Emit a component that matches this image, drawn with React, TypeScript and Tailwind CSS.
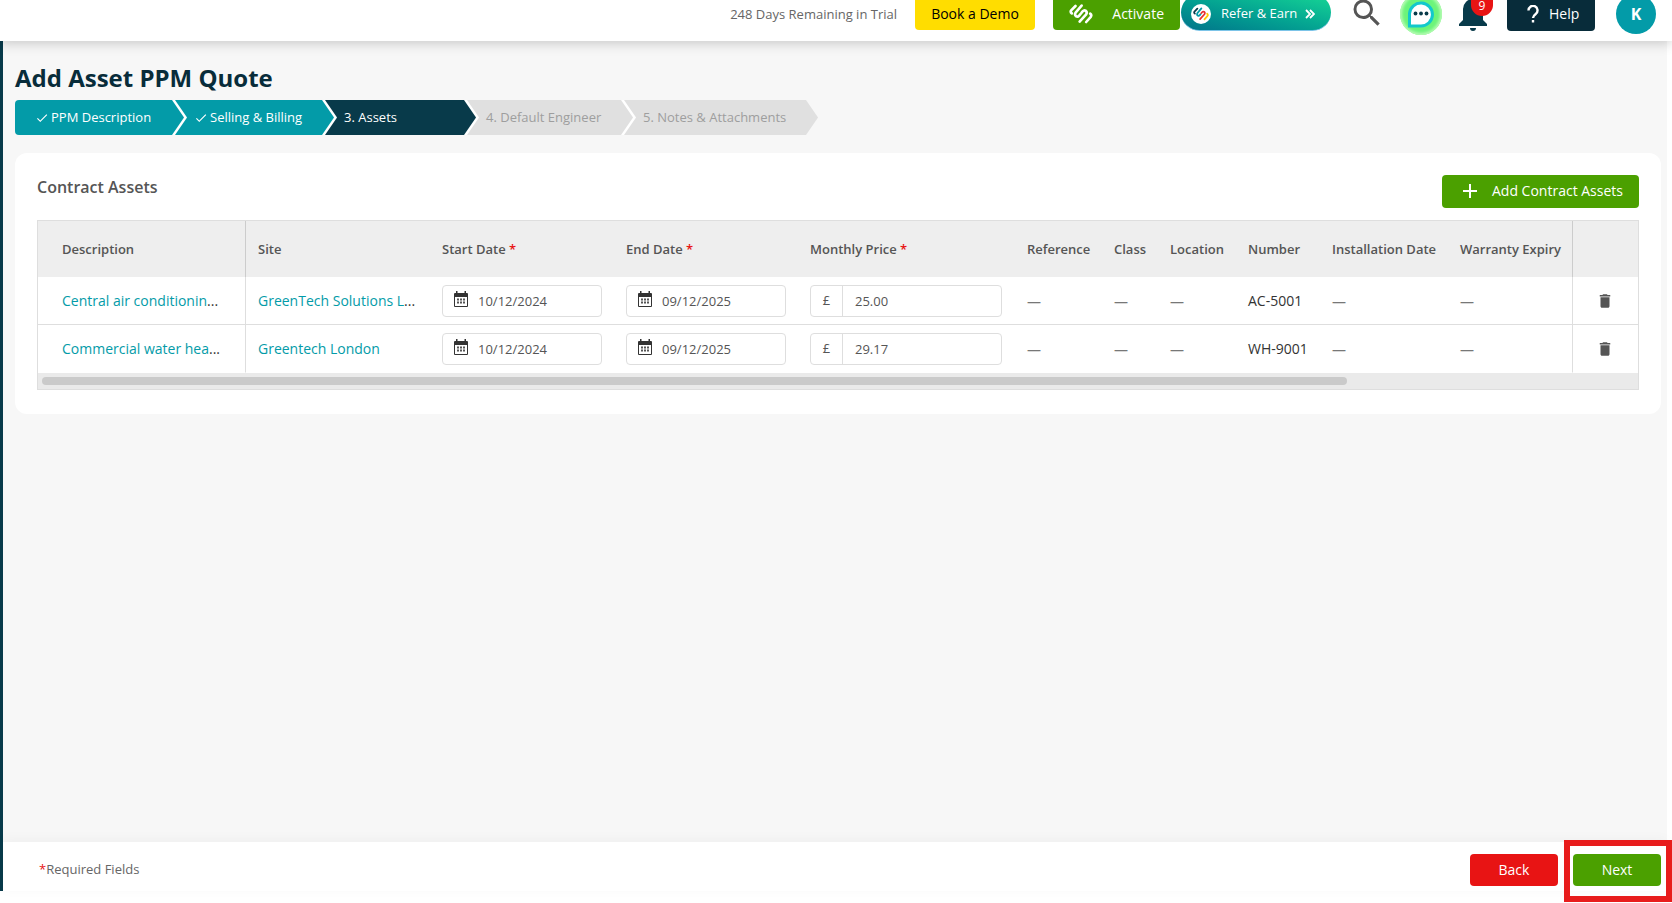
import { useState } from 'react';
import { MdCheck, MdDelete, MdSearch } from 'react-icons/md';

const STEPS = [
  { label: 'PPM Description', state: 'done', width: 'min-w-[157px]' },
  { label: 'Selling & Billing', state: 'done', width: 'min-w-[150px]' },
  { label: '3. Assets', state: 'active', width: 'min-w-[142px]' },
  { label: '4. Default Engineer', state: 'pending', width: 'min-w-[157px]' },
  { label: '5. Notes & Attachments', state: 'pending', width: 'min-w-[185px]' },
];

const STEP_STYLES: Record<string, { box: string; arrow: string }> = {
  done: { box: 'bg-[#039ba8] text-white', arrow: 'bg-[#039ba8]' },
  active: { box: 'bg-[#083a4a] text-white', arrow: 'bg-[#083a4a]' },
  pending: { box: 'bg-[#e0e0e0] text-[#9e9e9e]', arrow: 'bg-[#e0e0e0]' },
};

const ASSETS = [
  {
    description: 'Central air conditionin',
    site: 'GreenTech Solutions L',
    siteCut: true,
    start: '10/12/2024',
    end: '09/12/2025',
    price: '25.00',
    number: 'AC-5001',
  },
  {
    description: 'Commercial water hea',
    site: 'Greentech London',
    siteCut: false,
    start: '10/12/2024',
    end: '09/12/2025',
    price: '29.17',
    number: 'WH-9001',
  },
];

function BrandMark({ className, colors }: { className: string; colors: string[] }) {
  return (
    <svg viewBox="0 0 24 20" className={className} fill="none" strokeWidth="2.600" strokeLinecap="round" strokeLinejoin="round">
      <path d="M6.500 2L2.200 6.400Q1 8 2.800 9.400" stroke={colors[0]} />
      <path d="M12.600 1.600L6.600 8.600Q5.200 11 7.200 12.400Q8.800 13.200 10.200 11.600L11.400 10.200" stroke={colors[1]} />
      <path d="M10.600 17.600L17.200 10.400Q18.600 8 16.600 6.600Q15 5.800 13.600 7.400L12.400 8.800" stroke={colors[2]} />
      <path d="M21.200 9.600Q23 11 21.800 12.800L17.200 18" stroke={colors[3]} />
    </svg>
  );
}

function CalendarIcon() {
  return (
    <svg viewBox="0 0 14 16" className="mb-[3px] h-4 w-[14px] shrink-0" fill="#333">
      <path
        fillRule="evenodd"
        d="M2 0h1.500v2h7V0H12v2h1a1 1 0 0 1 1 1v12a1 1 0 0 1-1 1H1a1 1 0 0 1-1-1V3a1 1 0 0 1 1-1h1zM1 6v9h12V6z"
      />
      <path d="M3 7.500h2v2H3zM6 7.500h2v2H6zM9 7.500h2v2H9zM3 10.500h2v2H3zM6 10.500h2v2H6zM9 10.500h2v2H9z" fill="#555" />
    </svg>
  );
}

function DateField({ label, value }: { label: string; value: string }) {
  return (
    <label className="flex h-8 w-[160px] items-center gap-[10px] rounded border border-[#dedede] bg-white pl-[11px]">
      <CalendarIcon />
      <input
        aria-label={label}
        defaultValue={value}
        className="w-full min-w-0 bg-transparent pt-[2px] text-[13px] text-[#555] outline-none"
      />
    </label>
  );
}

function TopBar() {
  return (
    <header className="relative z-10 flex h-[41px] shrink-0 items-start justify-end bg-white pr-4 shadow-[0_2px_12px_rgba(0,0,0,0.2)]">
      <span className="mr-[18px] text-[13px] leading-7 text-[#666]">248 Days Remaining in Trial</span>
      <button className="mr-[18px] h-[30px] w-[120px] rounded-b bg-[#ffdd00] pb-[3px] text-[14px] text-black">
        Book a Demo
      </button>
      <button className="flex h-[30px] w-[127px] items-center rounded-b bg-[#4ba000] pr-4 pb-[3px] pl-4 text-[14px] text-white">
        <BrandMark className="h-5 w-6" colors={['#fff', '#fff', '#fff', '#fff']} />
        <span className="ml-auto">Activate</span>
      </button>
      <button className="ml-px -mt-[6px] flex h-[37px] w-[150px] items-center rounded-full border-b border-[#7cc4e8] bg-linear-to-tr from-[#03748a] to-[#18d894] pt-[3px] pl-[10px] text-[13px] text-white">
        <span className="flex size-5 items-center justify-center rounded-full bg-white">
          <BrandMark className="h-[14px] w-4" colors={['#083a4a', '#039ba8', '#e83030', '#ffc800']} />
        </span>
        <span className="ml-[10px]">Refer &amp; Earn</span>
        <svg viewBox="0 0 10 10" className="ml-2 size-[10px]" fill="none" stroke="#fff" strokeWidth="1.800">
          <path d="M1 1l4 4-4 4M5 1l4 4-4 4" />
        </svg>
      </button>
      <button aria-label="Search" className="ml-[18px] h-7 w-9 text-[#555]">
        <MdSearch className="-mt-[5px] size-9" />
      </button>
      <button aria-label="Chat" className="ml-[15px] -mt-[7px] flex size-[42px] items-center justify-center rounded-full bg-[#6cf47a] shadow-[inset_0_0_3px_2px_#b9fbb5]">
        <svg viewBox="0 0 30 30" className="size-[30px]">
          <path d="M3.500 27V14.500a11.500 11.500 0 1 1 11.500 12.500z" fill="#fff" stroke="#12c8cc" strokeWidth="3" />
          <circle cx="9.500" cy="14.500" r="1.900" fill="#083a4a" />
          <circle cx="15" cy="14.500" r="1.900" fill="#083a4a" />
          <circle cx="20.500" cy="14.500" r="1.900" fill="#083a4a" />
        </svg>
      </button>
      <button aria-label="Notifications" className="relative ml-[17px] h-[31px] w-7">
        <svg viewBox="0 0 28 31" className="h-[31px] w-7" fill="#083a4a">
          <path d="M0 26v-2l4-4V9a10 10 0 0 1 20 0v11l4 4v2zM11 28h6a3 3 0 0 1-6 0z" />
        </svg>
        <span className="absolute top-0 left-3 h-4 w-[22px] rounded-b-full bg-[#e81414] text-center text-[12px] leading-3 text-white">
          9
        </span>
      </button>
      <button className="ml-5 flex h-[31px] w-[88px] items-center rounded-b bg-[#082c3a] pb-1 pl-5 text-[14px] text-white">
        <svg viewBox="0 0 12 18" className="h-[18px] w-3" fill="none" stroke="#fff" strokeWidth="2.400">
          <path d="M1.500 5.500a4.500 4.500 0 1 1 7.500 3.200Q6 11 6 13" />
          <path d="M6 15v2.500" />
        </svg>
        <span className="ml-[10px]">Help</span>
      </button>
      <button className="ml-[21px] -mt-[6px] size-10 rounded-full bg-[#039ba8] text-[16px] font-bold text-white">K</button>
    </header>
  );
}

function StepBar() {
  return (
    <ol className="flex h-[35px]">
      {STEPS.map((step, index) => (
        <li
          key={step.label}
          className={`relative flex items-center pl-[22px] text-[13px] whitespace-nowrap first:rounded-l-sm first:pl-5 ${step.width} ${STEP_STYLES[step.state].box}`}
        >
          {step.state === 'done' && <MdCheck className="mr-[2px] size-[14px]" />}
          {step.label}
          {/* ARROW */}
          {index < STEPS.length - 1 && (
            <span className="absolute left-full z-10 h-full w-[15px] bg-white [clip-path:polygon(0_0,3px_0,100%_50%,3px_100%,0_100%)]" />
          )}
          <span
            className={`absolute left-full z-10 h-full w-3 [clip-path:polygon(0_0,100%_50%,0_100%)] ${STEP_STYLES[step.state].arrow}`}
          />
        </li>
      ))}
    </ol>
  );
}

function Required() {
  return <span className="text-[#e81414]">*</span>;
}

function AssetTable() {
  const [assets, setAssets] = useState(ASSETS);

  return (
    <div className="border border-[#dedede]">
      <table className="w-full table-fixed border-separate border-spacing-0 text-left text-[14px] text-[#333]">
        <colgroup>
          <col className="w-[208px]" />
          <col className="w-[184px]" />
          <col className="w-[184px]" />
          <col className="w-[184px]" />
          <col className="w-[217px]" />
          <col className="w-[87px]" />
          <col className="w-[56px]" />
          <col className="w-[78px]" />
          <col className="w-[84px]" />
          <col className="w-[128px]" />
          <col className="w-[124px]" />
          <col className="w-[66px]" />
        </colgroup>
        <thead>
          <tr className="h-14 bg-[#eee] text-[13px] whitespace-nowrap text-[#555] *:pt-[2px] *:pl-3 *:font-semibold">
            <th className="border-r border-[#ccc] pl-6!">Description</th>
            <th>Site</th>
            <th>Start Date <Required /></th>
            <th>End Date <Required /></th>
            <th>Monthly Price <Required /></th>
            <th>Reference</th>
            <th>Class</th>
            <th>Location</th>
            <th>Number</th>
            <th>Installation Date</th>
            <th>Warranty Expiry</th>
            <th className="border-l border-[#ccc]" aria-label="Actions" />
          </tr>
        </thead>
        <tbody>
          {assets.map((asset) => (
            <tr
              key={asset.number}
              className="h-12 whitespace-nowrap *:border-b *:border-[#dedede] *:pl-3 last:*:border-b-white"
            >
              <td className="border-r pl-6!">
                <a href="#asset" className="text-[#039ba8]">{asset.description}</a>...
              </td>
              <td>
                <a href="#site" className="text-[#039ba8]">{asset.site}</a>
                {asset.siteCut && '...'}
              </td>
              <td><DateField label="Start date" value={asset.start} /></td>
              <td><DateField label="End date" value={asset.end} /></td>
              <td>
                <label className="flex h-8 w-[192px] items-center rounded border border-[#dedede] text-[13px] text-[#555]">
                  <span className="flex h-full w-8 shrink-0 items-center justify-center border-r border-[#dedede]">£</span>
                  <input
                    aria-label="Monthly price"
                    defaultValue={asset.price}
                    className="w-full min-w-0 bg-transparent pt-[2px] pl-3 outline-none"
                  />
                </label>
              </td>
              <td className="pt-[2px] text-[#777]">—</td>
              <td className="pt-[2px] text-[#777]">—</td>
              <td className="pt-[2px] text-[#777]">—</td>
              <td>{asset.number}</td>
              <td className="pt-[2px] text-[#777]">—</td>
              <td className="pt-[2px] text-[#777]">—</td>
              <td className="border-l pr-[2px] pb-[2px] pl-0! text-center">
                <button
                  aria-label="Delete asset"
                  className="align-middle text-[#555]"
                  onClick={() => setAssets(assets.filter((a) => a !== asset))}
                >
                  <MdDelete className="size-[18px]" />
                </button>
              </td>
            </tr>
          ))}
        </tbody>
      </table>
      {/* SCROLLBAR */}
      <div className="h-4 bg-[#eaeaea] p-1">
        <div className="h-2 w-[82%] rounded-full bg-[#cacaca]" />
      </div>
    </div>
  );
}

export default function App() {
  return (
    <div className="flex min-h-screen flex-col bg-white pb-3 font-['Open_Sans',sans-serif]">
      <TopBar />

      <div className="mr-[5px] flex grow flex-col border-l-3 border-[#083a4a] bg-[#f7f7f7]">
        <main className="grow pt-[21px] pr-[6px] pl-3">
          <h1 className="mb-[6px] text-[24px] leading-8 font-bold text-[#082c3a]">Add Asset PPM Quote</h1>
          <StepBar />

          <section className="mt-[18px] rounded-xl bg-white px-[22px] pt-[22px] pb-6">
            <div className="mb-3 flex items-start justify-between">
              <h2 className="text-[16px] leading-6 font-semibold text-[#555]">Contract Assets</h2>
              <button className="flex h-[33px] w-[197px] items-center rounded bg-[#4ba000] pb-[2px] pl-5 text-[14px] text-white">
                <svg viewBox="0 0 16 16" className="size-4" stroke="#fff" strokeWidth="2">
                  <path d="M8 1v14M1 8h14" />
                </svg>
                <span className="ml-[14px]">Add Contract Assets</span>
              </button>
            </div>
            <AssetTable />
          </section>
        </main>

        <footer className="flex h-[49px] items-center bg-white pt-[6px] pr-[6px] pl-9 shadow-[0_-2px_12px_rgba(0,0,0,0.04)]">
          <span className="pt-px text-[13px] text-[#666]">
            <Required />Required Fields
          </span>
          <button className="mr-[15px] ml-auto h-8 w-[88px] rounded bg-[#e81414] text-[14px] text-white">Back</button>
          <div className="relative">
            <button className="h-8 w-[88px] rounded bg-[#4ba000] text-[14px] text-white">Next</button>
            <span className="pointer-events-none absolute -top-[14px] -right-[11px] -bottom-4 -left-[9px] border-6 border-[#e81c1c]" />
          </div>
        </footer>
      </div>
    </div>
  );
}
